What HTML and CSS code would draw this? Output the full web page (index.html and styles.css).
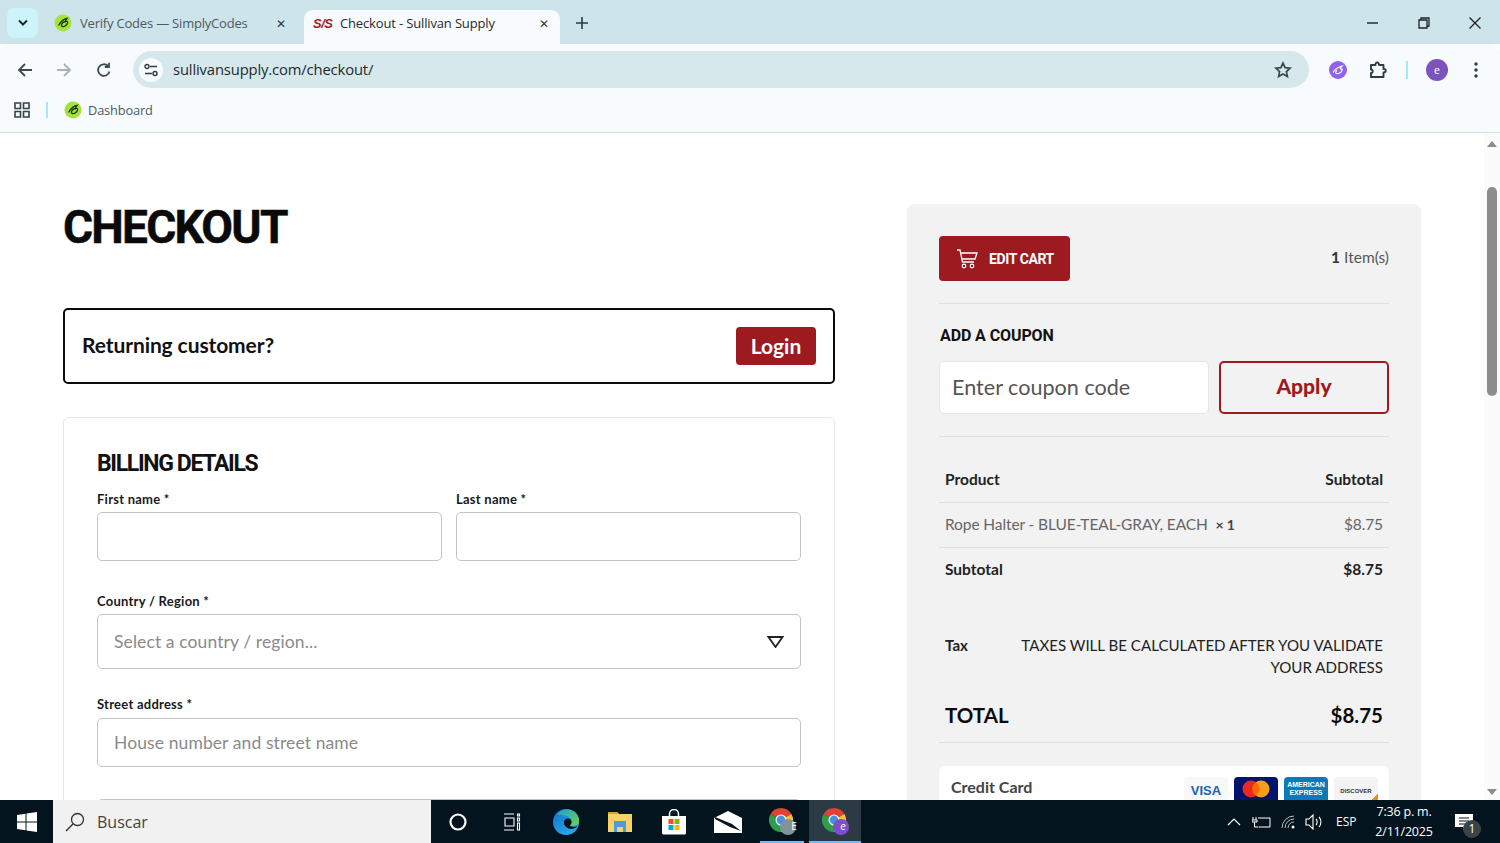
FILE: index.html
```html
<!DOCTYPE html>
<html lang="en">
<head>
<meta charset="utf-8">
<title>Checkout - Sullivan Supply</title>
<link rel="stylesheet" href="styles.css">
</head>
<body>
<div class="screen">
  <header class="tabstrip">
    <button class="tab-switch"><svg width="12" height="8" viewBox="0 0 12 8"><path d="M2 1.500l4 4 4-4" fill="none" stroke="#1f2a30" stroke-width="2"/></svg></button>
    <div class="tab">
      <svg class="fav" viewBox="0 0 18 18"><circle cx="9" cy="9" r="8.500" fill="#a4e43a"/><path d="M4.500 11.500c2-3.500 5-6.500 8.500-7-1 1-1.500 2-1.500 3 1.500-.5 2.500 0 2 1.500-.5 2-3 4-5 3.500-1.500-.3-1.500-2 0-3.500 1-1 2.500-1.500 3.500-1" fill="none" stroke="#22351a" stroke-width="1.300"/></svg>
      <span class="tab-title">Verify Codes — SimplyCodes</span>
      <span class="tab-x">✕</span>
    </div>
    <div class="tab tab-active">
      <span class="ss-logo">S/S</span>
      <span class="tab-title">Checkout - Sullivan Supply</span>
      <span class="tab-x">✕</span>
    </div>
    <span class="tab-new"><svg width="12" height="12" viewBox="0 0 12 12"><path d="M6 0v12M0 6h12" stroke="#2b3a40" stroke-width="1.600"/></svg></span>
    <div class="win-controls">
      <svg width="12" height="12" viewBox="0 0 12 12"><path d="M0 6h11" stroke="#1a2226" stroke-width="1.400"/></svg>
      <svg width="12" height="12" viewBox="0 0 12 12"><path d="M3 2.500V1h8v8H9.500M1 3h8v8H1z" fill="none" stroke="#1a2226" stroke-width="1.300"/></svg>
      <svg width="12" height="12" viewBox="0 0 12 12"><path d="M.5.500l11 11M11.500.500l-11 11" stroke="#1a2226" stroke-width="1.300"/></svg>
    </div>
  </header>

  <nav class="toolbar">
    <svg class="nav-icon" viewBox="0 0 16 16"><path d="M15 8H2M8 2L2 8l6 6" fill="none" stroke="#3d4a50" stroke-width="1.800"/></svg>
    <svg class="nav-icon nav-fwd" viewBox="0 0 16 16"><path d="M1 8h13M8 2l6 6-6 6" fill="none" stroke="#a8b2b6" stroke-width="1.800"/></svg>
    <svg class="nav-icon nav-reload" viewBox="0 0 16 16"><path d="M13.500 9.500A5.800 5.800 0 1 1 12 4M13 .8V5H8.800" fill="none" stroke="#3d4a50" stroke-width="1.800"/></svg>
    <div class="omnibox">
      <span class="site-info"><svg width="14" height="14" viewBox="0 0 14 14"><path d="M6 3.500h7M1 10.500h7" stroke="#2e3b40" stroke-width="1.500"/><circle cx="3" cy="3.500" r="2" fill="none" stroke="#2e3b40" stroke-width="1.400"/><circle cx="11" cy="10.500" r="2" fill="none" stroke="#2e3b40" stroke-width="1.400"/></svg></span>
      <span class="url">sullivansupply.com/checkout/</span>
      <svg class="star" viewBox="0 0 18 18"><path d="M9 2l2.100 4.600 5 .6-3.700 3.400 1 5L9 13.100 4.600 15.600l1-5L1.900 7.200l5-.6z" fill="none" stroke="#3a474c" stroke-width="1.700"/></svg>
    </div>
    <svg class="ext-simply" viewBox="0 0 18 18"><circle cx="9" cy="9" r="9" fill="#9062ee"/><path d="M4 11.500c2-3 5-5.500 9-6.500-1 1-1.500 2-1.500 3 1.500-.3 2 .5 1.500 1.500-.7 2-3.500 3.500-5.500 3-1.300-.4-1-2 .5-3" fill="none" stroke="#fff" stroke-width="1.200"/></svg>
    <svg class="ext-puzzle" viewBox="0 0 20 20"><path d="M2 5h4.500c-.5-3 3.500-3.500 3.500 0h4.500v4c3-.5 3 3.500 0 3.500V17H2v-4c2 .5 2.500-3.500 0-3.500z" fill="none" stroke="#2f3c41" stroke-width="1.900" stroke-linejoin="round"/></svg>
    <span class="tool-sep"></span>
    <span class="avatar">e</span>
    <svg class="kebab" viewBox="0 0 4 16"><circle cx="2" cy="2" r="1.700" fill="#2f3c41"/><circle cx="2" cy="8" r="1.700" fill="#2f3c41"/><circle cx="2" cy="14" r="1.700" fill="#2f3c41"/></svg>
  </nav>

  <div class="bookmarks">
    <svg class="apps" viewBox="0 0 16 16"><path d="M1 1h5.500v5.500H1zM9.500 1H15v5.500H9.500zM1 9.500h5.500V15H1zM9.500 9.500H15V15H9.500z" fill="none" stroke="#36434a" stroke-width="1.600"/></svg>
    <span class="bm-sep"></span>
    <svg class="fav" viewBox="0 0 18 18"><circle cx="9" cy="9" r="8.500" fill="#a4e43a"/><path d="M4.500 11.500c2-3.500 5-6.500 8.500-7-1 1-1.500 2-1.500 3 1.500-.5 2.500 0 2 1.500-.5 2-3 4-5 3.500-1.500-.3-1.500-2 0-3.500 1-1 2.500-1.500 3.500-1" fill="none" stroke="#22351a" stroke-width="1.300"/></svg>
    <span class="bm-label">Dashboard</span>
  </div>

  <div class="viewport">
    <main class="page">
      <section class="col-main">
        <h1 class="page-title">CHECKOUT</h1>
        <div class="returning">
          <span class="returning-text">Returning customer?</span>
          <a class="btn-login">Login</a>
        </div>
        <div class="billing">
          <h2 class="billing-title">BILLING DETAILS</h2>
          <div class="name-row">
            <div class="field">
              <label class="label">First name *</label>
              <div class="input"></div>
            </div>
            <div class="field">
              <label class="label">Last name *</label>
              <div class="input"></div>
            </div>
          </div>
          <div class="field field-country">
            <label class="label">Country / Region *</label>
            <div class="input input-select">
              <span class="placeholder">Select a country / region...</span>
              <svg width="17" height="12" viewBox="0 0 17 12"><path d="M1.500 1h14l-7 10z" fill="none" stroke="#222" stroke-width="1.800"/></svg>
            </div>
          </div>
          <div class="field field-street">
            <label class="label">Street address *</label>
            <div class="input"><span class="placeholder">House number and street name</span></div>
          </div>
          <div class="input input-next"></div>
        </div>
      </section>

      <aside class="summary">
        <div class="cart-row">
          <a class="btn-cart">
            <svg width="22" height="22" viewBox="0 0 22 22"><path d="M1 2h3l2.500 12h11.500M5 5h16l-2 6H6.500" fill="none" stroke="#fff" stroke-width="1.300"/><circle cx="8" cy="18" r="1.800" fill="none" stroke="#fff" stroke-width="1.200"/><circle cx="16" cy="18" r="1.800" fill="none" stroke="#fff" stroke-width="1.200"/></svg>
            <span>EDIT CART</span>
          </a>
          <span class="items"><b>1</b> Item(s)</span>
        </div>
        <div class="coupon">
          <h3 class="coupon-title">ADD A COUPON</h3>
          <div class="coupon-row">
            <div class="coupon-input">Enter coupon code</div>
            <a class="btn-apply">Apply</a>
          </div>
        </div>
        <div class="order">
          <div class="order-row order-head"><span>Product</span><span>Subtotal</span></div>
          <div class="order-row order-item"><span>Rope Halter - BLUE-TEAL-GRAY, EACH &nbsp;<b>× 1</b></span><span>$8.75</span></div>
          <div class="order-row order-sub"><b>Subtotal</b><b>$8.75</b></div>
          <div class="order-tax"><b>Tax</b><span class="tax-note">TAXES WILL BE CALCULATED AFTER YOU VALIDATE YOUR ADDRESS</span></div>
          <div class="order-total"><b>TOTAL</b><b class="total-price">$8.75</b></div>
        </div>
        <div class="pay-card">
          <span class="pay-title">Credit Card</span>
          <div class="pay-logos">
            <span class="logo logo-visa">VISA</span>
            <span class="logo logo-mc"><svg width="30" height="18" viewBox="0 0 30 18"><circle cx="10" cy="9" r="8.500" fill="#eb2a1f"/><circle cx="20" cy="9" r="8.500" fill="#f79e1b"/><path d="M15 2.200a8.500 8.500 0 0 1 0 13.600 8.500 8.500 0 0 1 0-13.600z" fill="#ff6a00"/></svg></span>
            <span class="logo logo-amex">AMERICAN EXPRESS</span>
            <span class="logo logo-disc">DISCOVER</span>
          </div>
        </div>
      </aside>
    </main>
    <div class="scrollbar">
      <span class="sb-up"></span>
      <span class="sb-thumb"></span>
      <span class="sb-down"></span>
    </div>
  </div>

  <footer class="taskbar">
    <span class="start"><svg width="20" height="20" viewBox="0 0 20 20"><path d="M0 3l8.500-1.200v7.700H0zM9.500 1.600L20 0v9.500H9.500zM0 10.500h8.500v7.700L0 17zM9.500 10.500H20V20L9.500 18.400z" fill="#fff"/></svg></span>
    <div class="search">
      <svg width="20" height="20" viewBox="0 0 20 20"><circle cx="12.500" cy="7.500" r="6" fill="none" stroke="#333" stroke-width="1.300"/><path d="M8.200 11.800L1 19" stroke="#333" stroke-width="1.400"/></svg>
      <span>Buscar</span>
    </div>
    <span class="tb-item"><svg width="18" height="18" viewBox="0 0 18 18"><circle cx="9" cy="9" r="7.500" fill="none" stroke="#fff" stroke-width="2.200"/></svg></span>
    <span class="tb-item"><svg width="20" height="18" viewBox="0 0 20 18"><path d="M2 1h10M2 17h10M3 5h9v8H3zM15.500 1h2v2h-2zM15.500 5h2v3h-2zM15.500 10h2v7h-2z" fill="none" stroke="#fff" stroke-width="1.100"/></svg></span>
    <span class="tb-item"><svg width="28" height="28" viewBox="0 0 28 28"><defs><linearGradient id="edgeBlue" x1="0" y1="0" x2="0.600" y2="1"><stop offset="0" stop-color="#0f6fc8"/><stop offset="1" stop-color="#2aa8e8"/></linearGradient><linearGradient id="edgeGreen" x1="0" y1="0" x2="1" y2="1"><stop offset="0" stop-color="#1b9fd8"/><stop offset="1" stop-color="#6fd34a"/></linearGradient></defs><circle cx="14" cy="14" r="13" fill="url(#edgeBlue)"/><path d="M5 7C8 1 17-1 23 4c4 3.500 5 9 3.500 12-2 2-6 2.500-8.500 1.500 2-2 2.500-5 .5-7C15 7 9 7 5 7z" fill="url(#edgeGreen)"/><path d="M14 11c3-1.500 6 .5 5.500 3.500-.3 2-2 3.500-2 3.500 2 1 5.500 1.200 8 0-.3 1-4 3-6 3-4 0-8-3-7.500-7 0-1.200.7-2.300 2-3z" fill="#03141f"/></svg></span>
    <span class="tb-item"><svg width="26" height="24" viewBox="0 0 26 24"><path d="M1 2h9l2 2h13v18H1z" fill="#f7d365"/><path d="M1 2h9l2 2H1z" fill="#d9a52c"/><path d="M7 11h12v11h-3v-5h-6v5H7z" fill="#4a9be0"/></svg></span>
    <span class="tb-item"><svg width="26" height="26" viewBox="0 0 26 26"><path d="M8.500 7V5a4.500 4.500 0 0 1 9 0v2" fill="none" stroke="#fff" stroke-width="1.500"/><path d="M1 7h24v17a1.500 1.500 0 0 1-1.500 1.500h-21A1.500 1.500 0 0 1 1 24z" fill="#fff"/><path d="M7.500 10h5v5h-5z" fill="#f25022"/><path d="M13.500 10h5v5h-5z" fill="#7fba00"/><path d="M7.500 16h5v5h-5z" fill="#00a4ef"/><path d="M13.500 16h5v5h-5z" fill="#ffb900"/></svg></span>
    <span class="tb-item"><svg width="28" height="22" viewBox="0 0 28 22"><path d="M0 7L14 0l14 7v15H0z" fill="#fff"/><path d="M1 6l17 7 9 7-11-4L1 8z" fill="#03141f"/></svg></span>
    <span class="tb-item tb-running"><svg width="30" height="30" viewBox="0 0 30 30"><g transform="translate(2 2)"><path d="M12 12L22.400 6A12 12 0 0 0 1.600 6z" fill="#e34133"/><path d="M12 12v12A12 12 0 0 0 22.400 6z" fill="#fbc02d"/><path d="M12 12L1.600 6A12 12 0 0 0 12 24z" fill="#2e9e4a"/><circle cx="12" cy="12" r="5.500" fill="#fff"/><circle cx="12" cy="12" r="4.400" fill="#4a90e2"/></g><circle cx="21" cy="21" r="8" fill="#82929b"/></svg><span class="badge-letter">E</span></span>
    <span class="tb-item tb-running tb-current"><svg width="30" height="30" viewBox="0 0 30 30"><g transform="translate(2 2)"><path d="M12 12L22.400 6A12 12 0 0 0 1.600 6z" fill="#e34133"/><path d="M12 12v12A12 12 0 0 0 22.400 6z" fill="#fbc02d"/><path d="M12 12L1.600 6A12 12 0 0 0 12 24z" fill="#2e9e4a"/><circle cx="12" cy="12" r="5.500" fill="#fff"/><circle cx="12" cy="12" r="4.400" fill="#4a90e2"/></g><circle cx="21" cy="21" r="8" fill="#7e4fc9"/></svg><span class="badge-letter">e</span></span>
    <div class="tray">
      <svg width="14" height="8" viewBox="0 0 14 8"><path d="M1 7l6-6 6 6" fill="none" stroke="#fff" stroke-width="1.200"/></svg>
      <svg width="19" height="12" viewBox="0 0 19 12"><path d="M6 2h12v9H7M1 1v3M4 1v3M0 4h5v2H0zM2.500 6v5h4" fill="none" stroke="#fff" stroke-width="1"/></svg>
      <svg width="16" height="14" viewBox="0 0 16 14"><path d="M1 13A12 12 0 0 1 13 1M4 13A9 9 0 0 1 13 4M7 13a6 6 0 0 1 6-6" fill="none" stroke="#b8c0c4" stroke-width="1"/><circle cx="12" cy="12" r="1.500" fill="#fff"/></svg>
      <svg width="18" height="16" viewBox="0 0 18 16"><path d="M1 5h3l4-4v14l-4-4H1zM11 5c1.500 1.500 1.500 4.500 0 6M14 3c2.500 2.500 2.500 7.500 0 10" fill="none" stroke="#fff" stroke-width="1.100"/></svg>
      <span class="tray-lang">ESP</span>
      <div class="clock"><span>7:36 p. m.</span><span>2/11/2025</span></div>
      <span class="notify">
        <svg width="18" height="16" viewBox="0 0 18 16"><path d="M0 0h18v13h-7l-3 3v-3H0z" fill="#fff"/><path d="M4 4h10M4 7h10M4 10h7" stroke="#03141f" stroke-width="1"/></svg>
        <span class="notify-count">1</span>
      </span>
    </div>
  </footer>
</div>
</body>
</html>
```

FILE: styles.css
```css
* { box-sizing: border-box; }
html, body { margin: 0; padding: 0; }
body { font-family: Lato, "Open Sans", sans-serif; color: #111; background: #fff; }
svg { display: block; flex: none; }
b { font-weight: 700; }
h1, h2, h3 { margin: 0; }

.screen { width: 1500px; height: 843px; display: flex; flex-direction: column; overflow: hidden; }

/* browser chrome */
.tabstrip { height: 44px; background: #cde4ea; display: flex; align-items: flex-start; padding: 8px 0 0 7px; font-family: "Open Sans", sans-serif; flex: none; }
.tab-switch { width: 31px; height: 30px; border: 0; border-radius: 8px; background: #cdf4fb; display: flex; align-items: center; justify-content: center; padding: 0; }
.tab { width: 256px; height: 36px; display: flex; align-items: center; padding: 0 11px 0 16px; gap: 9px; font-size: 13px; color: #4c5a60; }
.tab .tab-x { margin-left: auto; font-size: 12px; color: #2c383d; }
.tab-title { letter-spacing: -.15px; white-space: nowrap; }
.tab-active { margin-left: 5px; margin-top: 2px; height: 34px; padding-bottom: 8px; background: #f7fbfd; border-radius: 9px 9px 0 0; color: #25292c; padding-left: 9px; }
.tab:first-of-type { width: 261px; gap: 8px; padding-left: 16px; padding-right: 13px; margin-top: 0; height: 30px; }
.tab:first-of-type .tab-title { letter-spacing: -.2px; }
.ss-logo { font: italic 700 13px "Liberation Sans", sans-serif; color: #a31d25; letter-spacing: -.5px; width: 18px; }
.fav { width: 18px; height: 18px; }
.tab-new { margin: 9px 0 0 16px; }
.win-controls { margin-left: auto; display: flex; gap: 39px; padding: 9px 19px 0 0; align-items: center; }

.toolbar { height: 44px; background: #f7fbfd; border-radius: 9px 9px 0 0; display: flex; align-items: center; padding-left: 17px; flex: none; }
.nav-icon { width: 16px; height: 16px; margin-top: 7px; }
.nav-fwd { margin-left: 23px; }
.nav-reload { margin-left: 24px; }
.omnibox { margin: 7px 0 0 21px; width: 1176px; height: 37px; background: #d7e8ec; border-radius: 19px; display: flex; align-items: center; padding: 0 17px 0 6px; }
.site-info { width: 24px; height: 24px; border-radius: 50%; background: #f7fbfd; display: flex; align-items: center; justify-content: center; }
.url { margin-left: 10px; padding-bottom: 1px; font: 14.800px "Open Sans", sans-serif; letter-spacing: -.15px; color: #1e2a2f; }
.star { width: 18px; height: 18px; margin-left: auto; }
.ext-simply { width: 18px; height: 18px; margin: 7px 0 0 20px; }
.ext-puzzle { width: 20px; height: 20px; margin: 7px 0 0 22px; }
.tool-sep { width: 2px; height: 18px; background: #a6e8f5; margin: 7px 0 0 17px; }
.avatar { width: 22px; height: 22px; border-radius: 50%; background: #7c52bd; color: #fff; font: 13px/21px "Liberation Serif", serif; text-align: center; margin: 7px 0 0 18px; }
.kebab { width: 4px; height: 16px; margin: 7px 0 0 26px; }

.bookmarks { height: 45px; background: #f7fbfd; border-bottom: 1px solid #d9dde0; display: flex; align-items: center; padding: 0 0 1px 14px; flex: none; }
.apps { width: 16px; height: 16px; }
.bm-sep { width: 2px; height: 16px; background: #a6e8f5; margin: 0 16px 0 16px; }
.bm-label { margin-left: 6px; font: 12.800px "Open Sans", sans-serif; letter-spacing: -.15px; color: #4c5a60; }

/* page */
.viewport { flex: 1; min-height: 0; display: flex; overflow: hidden; }
.page { flex: 1; min-width: 0; display: flex; gap: 72px; padding: 71px 0 0 63px; overflow: hidden; align-items: flex-start; }
.col-main { width: 772px; flex: none; }
.page-title { font: 700 46px/46px Roboto, sans-serif; letter-spacing: -1.750px; -webkit-text-stroke: .5px #0a0a0a; color: #0a0a0a; height: 46px; }
.returning { height: 76px; margin-top: 58px; border: 2.500px solid #0b0b0b; border-radius: 5px; display: flex; align-items: center; justify-content: space-between; padding: 0 17px; }
.returning-text { font-size: 21px; font-weight: 700; color: #111; letter-spacing: -.1px; padding-bottom: 4px; }
.btn-login { width: 80px; height: 38px; background: #9c1a20; color: #fff; border-radius: 4px; font-size: 21px; font-weight: 700; text-align: center; line-height: 38px; }
.billing { margin-top: 33px; height: 460px; border: 1px solid #e7e7e7; border-radius: 6px; padding: 33px 33px 0; }
.billing-title { font: 700 23px/26px Roboto, sans-serif; letter-spacing: -1.350px; color: #111; }
.name-row { display: grid; grid-template-columns: 345px 345px; column-gap: 14px; margin-top: 14px; }
.label { display: block; font-size: 13px; line-height: 16px; font-weight: 700; letter-spacing: .25px; color: #1a1a1a; margin-bottom: 5px; }
.input { height: 49px; border: 1.500px solid #c4c4c4; border-radius: 5px; background: #fff; display: flex; align-items: center; padding: 0 16px; }
.placeholder { font-size: 17.500px; letter-spacing: .1px; color: #8a8a8a; }
.field-country { margin-top: 32px; }
.input-select { height: 55px; justify-content: space-between; }
.field-street { margin-top: 27px; }
.field-street .label { margin-bottom: 6px; }
.input-next { margin-top: 32px; }

.summary { width: 514px; flex: none; height: 640px; background: #f2f2f2; border-radius: 7px 7px 0 0; padding: 32px 32px 0; }
.cart-row { height: 68px; border-bottom: 1.500px solid #dfdfdf; display: flex; align-items: flex-start; justify-content: space-between; }
.btn-cart { width: 131px; height: 45px; background: #9c1a20; border-radius: 4px; color: #fff; display: flex; align-items: center; gap: 11px; padding-left: 17px; font: 700 14px Roboto, sans-serif; letter-spacing: -.4px; }
.items { margin-top: 12px; font-size: 15.500px; color: #555; }
.items b { color: #333; }
.coupon { height: 133px; border-bottom: 1.500px solid #dfdfdf; padding-top: 23px; }
.coupon-title { font: 700 16px/18px Roboto, sans-serif; letter-spacing: -.1px; color: #111; padding-left: 1px; }
.coupon-row { display: grid; grid-template-columns: 270px 170px; column-gap: 10px; margin-top: 16px; }
.coupon-input { height: 53px; background: #fff; border: 1.500px solid #e6e6e6; border-radius: 5px; padding-left: 12px; font-size: 21.600px; line-height: 51px; color: #555; }
.btn-apply { height: 53px; border: 2px solid #9c1a20; border-radius: 5px; color: #9c1a20; font-size: 21px; font-weight: 900; text-align: center; line-height: 46px; }
.order-row { display: flex; justify-content: space-between; align-items: center; height: 45px; padding: 0 6px 2px; border-bottom: 1px solid #dfdfdf; font-size: 15.500px; }
.order-head { margin-top: 20px; height: 46px; font-weight: 700; color: #222; }
.order-item { color: #666; letter-spacing: -.1px; }
.order-item b { color: #444; font-size: 14px; }
.order-sub { border-bottom: 0; height: 44px; color: #222; }
.order-tax { display: flex; justify-content: space-between; padding: 0 6px; margin-top: 42px; font-size: 15.100px; line-height: 22px; color: #222; }
.tax-note { width: 372px; text-align: right; color: #222; }
.order-total { display: flex; justify-content: space-between; align-items: center; padding: 0 6px 4px; margin-top: 14px; height: 51px; border-bottom: 1px solid #dfdfdf; }
.order-total b { font-size: 20.500px; color: #0c0c0c; }
.pay-card { margin-top: 23px; height: 70px; background: #fff; border-radius: 6px; display: flex; justify-content: space-between; padding: 11px 11px 0 12px; align-items: flex-start; }
.pay-title { font-size: 16px; font-weight: 700; color: #444; }
.pay-logos { display: flex; gap: 6px; }
.logo { width: 44px; height: 30px; border-radius: 4px; display: flex; align-items: center; justify-content: center; text-align: center; }
.logo-visa { background: #f8f8f8; color: #1a63b0; padding-bottom: 3px; font: 700 13px "Liberation Sans", sans-serif; }
.logo-mc { background: #00146b; align-items: flex-start; padding-top: 3px; }
.logo-amex { background: #0a7ab8; color: #fff; padding-bottom: 7px; font: 700 7px/8px "Liberation Sans", sans-serif; }
.logo-disc { background: linear-gradient(135deg, #f3f3f3 82%, #f08a24 82%); color: #333; padding-bottom: 3px; font: 700 6px "Liberation Sans", sans-serif; }

.scrollbar { width: 16px; flex: none; background: #fbfbfb; display: flex; flex-direction: column; align-items: center; padding-top: 8px; }
.sb-up { width: 0; height: 0; border: 5px solid transparent; border-top: 0; border-bottom: 6px solid #8a8a8a; }
.sb-thumb { width: 10px; height: 209px; background: #8d8d8d; border-radius: 5px; margin-top: 40px; }
.sb-down { width: 0; height: 0; border: 5px solid transparent; border-bottom: 0; border-top: 6px solid #8a8a8a; margin-top: auto; margin-bottom: 5px; }

/* taskbar */
.taskbar { height: 43px; background: #03141f; display: flex; align-items: stretch; flex: none; font-family: "Open Sans", sans-serif; color: #fff; }
.start { width: 53px; display: flex; align-items: center; justify-content: center; }
.search { width: 378px; background: #f1f1f1; display: flex; align-items: center; gap: 12px; padding-left: 12px; color: #444; font-size: 16px; }
.tb-item { width: 54px; position: relative; display: flex; align-items: center; justify-content: center; }
.tb-running { border-bottom: 2px solid #76b9ed; margin: 0 5px; width: 44px; }
.tb-current { background: #2b3a44; margin: 0; width: 52px; }
.badge-letter { position: absolute; left: 26px; top: 19px; width: 16px; text-align: center; font-size: 10px; line-height: 14px; color: #fff; }
.tray { margin-left: auto; display: flex; align-items: center; padding-right: 18px; }
.tray svg:nth-child(1) { margin-right: 11px; }
.tray svg:nth-child(2) { margin-right: 10px; }
.tray svg:nth-child(3) { margin-right: 8px; }
.tray-lang { margin-left: 13px; font-size: 12px; width: 34px; }
.clock { margin-left: 4px; width: 60px; display: flex; flex-direction: column; align-items: center; font-size: 12.500px; line-height: 20px; letter-spacing: -.2px; white-space: nowrap; }
.notify { margin-left: 21px; position: relative; display: block; width: 27px; }
.notify-count { position: absolute; left: 8px; top: 6px; width: 18px; height: 18px; border-radius: 50%; background: #3c4348; font-size: 12px; line-height: 18px; text-align: center; }
```
